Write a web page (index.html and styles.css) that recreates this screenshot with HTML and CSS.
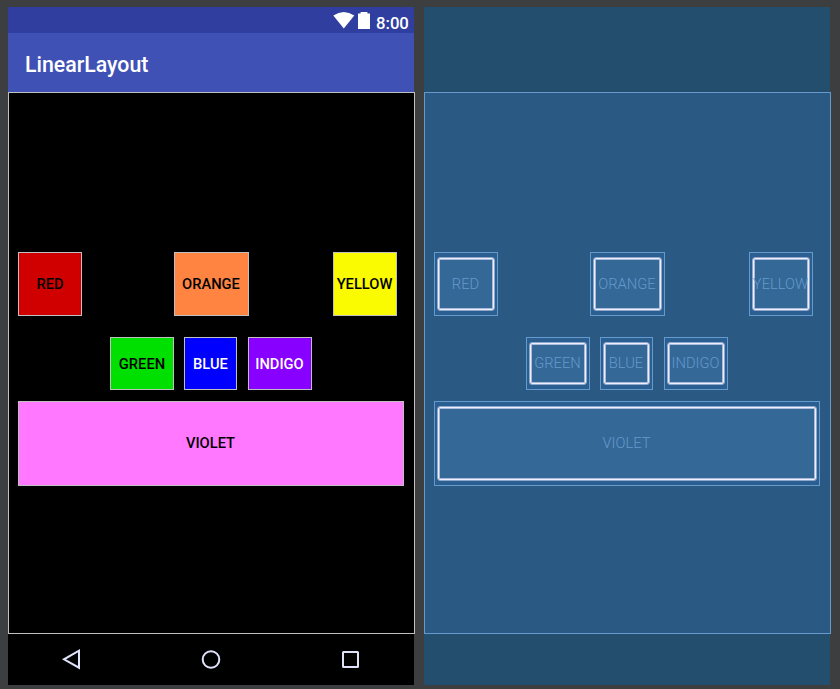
FILE: index.html
```html
<!DOCTYPE html>
<html lang="en">
<head>
<meta charset="utf-8">
<title>LinearLayout</title>
<link rel="stylesheet" href="styles.css">
</head>
<body>
<main class="surface">
  <section class="device">
    <header class="status">
      <svg class="wifi" width="22" height="17" viewBox="0 0 22 17"><path d="M0.3 3.6Q10.8-3.4 21.3 3.6L10.8 16.4Z" fill="#fff"/></svg>
      <svg class="battery" width="12" height="17" viewBox="0 0 12 17"><path d="M0 1.6H2.6V0H9.4V1.6H12V17H0Z" fill="#fff"/></svg>
      <span class="clock">8:00</span>
    </header>
    <div class="toolbar"><span>LinearLayout</span></div>
    <div class="content">
      <div class="row spread">
        <div class="btn red"><span>RED</span></div>
        <div class="btn orange"><span>ORANGE</span></div>
        <div class="btn yellow"><span>YELLOW</span></div>
      </div>
      <div class="row center">
        <div class="btn green"><span>GREEN</span></div>
        <div class="btn blue"><span>BLUE</span></div>
        <div class="btn indigo"><span>INDIGO</span></div>
      </div>
      <div class="btn violet"><span>VIOLET</span></div>
    </div>
    <nav class="nav">
      <svg width="20" height="22" viewBox="0 0 20 22"><path d="M18 2.7V19.7L3 11.3Z"/></svg>
      <svg width="20" height="22" viewBox="0 0 20 22"><circle cx="10" cy="11.5" r="8.3"/></svg>
      <svg width="20" height="22" viewBox="0 0 20 22"><rect x="3" y="4" width="15" height="15" rx=".5"/></svg>
    </nav>
  </section>
  <section class="device blueprint">
    <div class="status"></div>
    <div class="toolbar"></div>
    <div class="content">
      <div class="row spread">
        <div class="btn red"><span>RED</span></div>
        <div class="btn orange"><span>ORANGE</span></div>
        <div class="btn yellow"><span>YELLOW</span></div>
      </div>
      <div class="row center">
        <div class="btn green"><span>GREEN</span></div>
        <div class="btn blue"><span>BLUE</span></div>
        <div class="btn indigo"><span>INDIGO</span></div>
      </div>
      <div class="btn violet"><span>VIOLET</span></div>
    </div>
    <div class="nav"></div>
  </section>
</main>
</body>
</html>
```
FILE: styles.css
```css
* { box-sizing: border-box; }
body {
  margin: 0;
  background: #3c3e3f;
  font-family: Roboto, sans-serif;
  overflow: hidden;
}
.surface {
  display: flex;
  gap: 10px;
  height: 689px;
  padding: 7px 8px 4px;
}
.device {
  flex: none;
  width: 406px;
  height: 678px;
  background: #000;
}
.status {
  display: flex;
  height: 26px;
  padding: 5px 6px 0 0;
  justify-content: flex-end;
  background: #303f9f;
  color: #fff;
}
.battery { margin: 0 6px 0 3px; }
.clock { width: 32px; font-size: 16.7px; font-weight: 500; line-height: 24px; }
.toolbar {
  display: flex;
  align-items: center;
  height: 59px;
  padding: 4px 0 0 17px;
  background: #3f51b5;
  color: #fff;
  font-size: 21.3px;
  font-weight: 500;
}
.content {
  width: 407px;
  height: 542px;
  padding: 159px 9px 0;
  border: 1px solid #c0c0c0;
}
.row { display: flex; }
.spread { width: 379px; justify-content: space-between; margin-bottom: 21px; }
.center { gap: 10px; margin: 0 0 11px 92px; }
.btn {
  display: flex;
  align-items: center;
  justify-content: center;
  width: 64px;
  height: 64px;
  padding-right: 1px;
  border: 1px solid #c0c0c0;
  color: #000;
  font-size: 14.7px;
  font-weight: 500;
  line-height: 20px;
}
.btn.red, .btn.green, .btn.blue { padding-right: 0; }
.center .btn { height: 53px; }
.red { background: #d00000; }
.btn.orange { width: 75px; margin-left: 8px; background: #ff8442; }
.yellow { background: #fafa00; }
.green { background: #00e000; }
.btn.blue { width: 53px; background: #00f; color: #fff; }
.btn.indigo { margin-left: 1px; background: #80f; color: #fff; }
.btn.violet { width: 386px; height: 85px; padding-bottom: 1px; background: #ff78ff; }
.nav {
  display: flex;
  justify-content: space-between;
  height: 51px;
  padding: 14px 54px 0 53px;
}
.nav svg { fill: none; stroke: #e0e2fa; stroke-width: 2; }

.blueprint, .blueprint .status, .blueprint .toolbar { background: #234e6e; }
.blueprint .content { background: #2a5a84; border-color: #6699cc; }
.blueprint .row .btn, .blueprint .btn.violet {
  align-items: stretch;
  padding: 4px 2px;
  border-color: #6699cc;
  background: #2b5f91;
  color: #6699cc;
  font-weight: 300;
}
.blueprint .btn span {
  display: flex;
  flex: 1;
  min-width: 0;
  align-items: center;
  justify-content: center;
  padding: 0 1px 0 0;
  border: 1px solid #8ea8cd;
  box-shadow: inset 0 0 0 1px #f0eefc, inset 0 0 0 2px #a9bbdb;
  border-radius: 3px;
  background: #336897;
}
.blueprint .center .btn span, .blueprint .violet span { padding-bottom: 1px; }
```
